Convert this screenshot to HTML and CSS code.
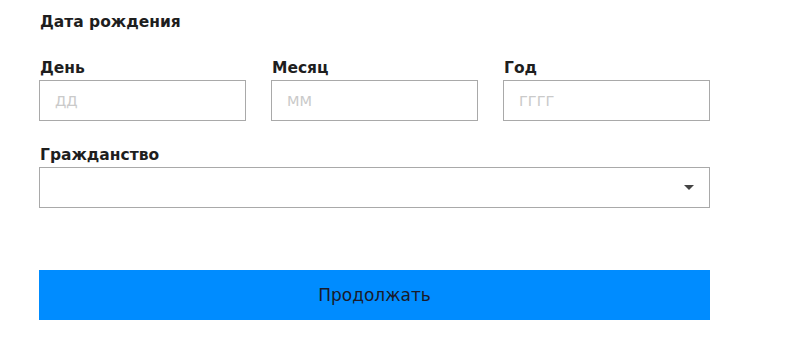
FILE: index.html
```html
<!DOCTYPE html>
<html>

<head>
    <title>Дата рождения</title>
    <link rel="stylesheet" href="styles.css">
</head>

<body>
    <form class="form">
        <div class="formTitle">Дата рождения</div>

        <div class="dateRow">
            <div class="field">
                <label class="fieldLabel" for="day">День</label>
                <input class="textInput" id="day" type="text" placeholder="ДД">
            </div>
            <div class="field">
                <label class="fieldLabel" for="month">Месяц</label>
                <input class="textInput" id="month" type="text" placeholder="ММ">
            </div>
            <div class="field">
                <label class="fieldLabel" for="year">Год</label>
                <input class="textInput" id="year" type="text" placeholder="ГГГГ">
            </div>
        </div>

        <div class="field citizenship">
            <label class="fieldLabel" for="citizenship">Гражданство</label>
            <div class="selectBox">
                <select class="selectInput" id="citizenship"></select>
                <span class="selectArrow"></span>
            </div>
        </div>

        <button class="submitButton" type="button">Продолжать</button>
    </form>
</body>

</html>
```

FILE: styles.css
```css
body {
    margin: 0;
    background-color: #ffffff;
    font-family: "DejaVu Sans", sans-serif;
    color: #1e1e1e;
}

.form {
    width: 671px;
    padding: 13px 0 0 39px;
}

.formTitle {
    font-size: 15.5px;
    font-weight: bold;
    line-height: 18px;
    padding-left: 1px;
}

.dateRow {
    display: flex;
    gap: 25px;
    margin-top: 28px;
}

.field {
    display: flex;
    flex-direction: column;
    flex: 1;
}

.fieldLabel {
    font-size: 15.5px;
    font-weight: bold;
    line-height: 18px;
    margin-bottom: 3px;
    padding-left: 1px;
}

.textInput {
    box-sizing: border-box;
    height: 41px;
    width: 100%;
    margin: 0;
    padding: 0 15px;
    border: 1px solid #a9a9a9;
    border-radius: 0;
    font-family: "DejaVu Sans", sans-serif;
    font-size: 14.5px;
    color: #333333;
    outline: none;
}

.textInput::placeholder {
    color: #cacaca;
}

.citizenship {
    margin-top: 25px;
}

.selectBox {
    position: relative;
    height: 41px;
}

.selectInput {
    box-sizing: border-box;
    width: 100%;
    height: 41px;
    margin: 0;
    border: 1px solid #a9a9a9;
    border-radius: 0;
    background-color: #ffffff;
    appearance: none;
    outline: none;
}

.selectArrow {
    position: absolute;
    right: 16px;
    top: 18px;
    width: 0;
    height: 0;
    border-left: 5px solid transparent;
    border-right: 5px solid transparent;
    border-top: 5px solid #444444;
}

.submitButton {
    display: block;
    width: 100%;
    height: 50px;
    margin-top: 62px;
    border: none;
    border-radius: 0;
    background-color: #008cff;
    color: #1a1a2a;
    font-family: "DejaVu Sans", sans-serif;
    font-size: 17px;
    cursor: pointer;
}
```
